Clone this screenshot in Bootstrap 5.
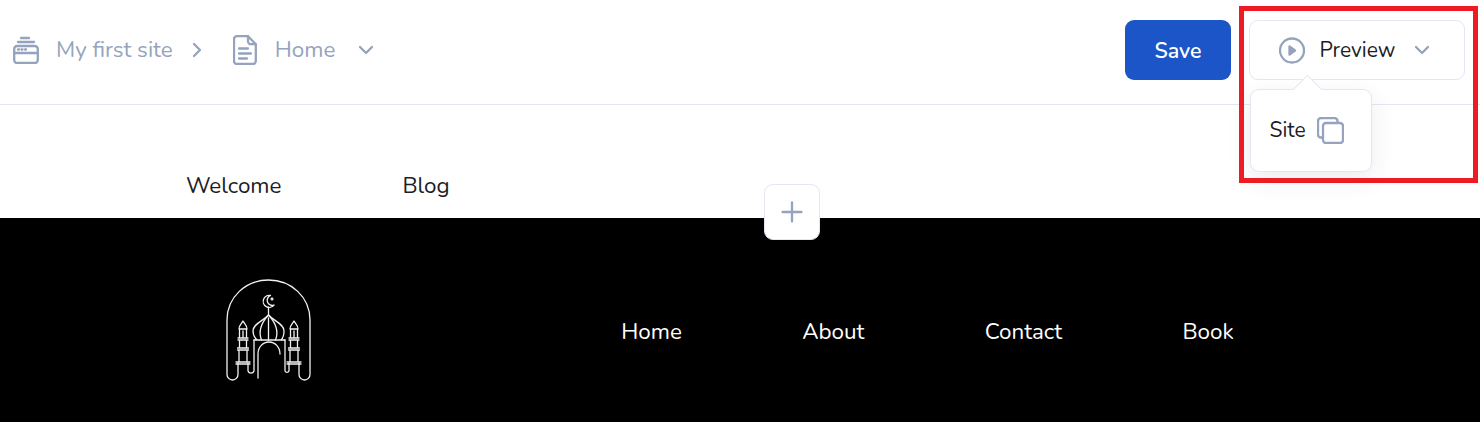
<!DOCTYPE html>
<html lang="en">
<head>
    <meta charset="UTF-8">
    <title>Site editor</title>
    <link href="https://cdn.jsdelivr.net/npm/bootstrap@5.3.0/dist/css/bootstrap.min.css" rel="stylesheet">
    <style>
        body { font-family: "Nunito", "Open Sans", "Liberation Sans", sans-serif; background: #fff; overflow: hidden; }
        .editor-page { height: 422px; }
        .top-bar { height: 105px; border-bottom: 1px solid #e4e6f3; padding: 0 15px 4px 13px; }
        .crumb { font-size: 22.4px; color: #95a3bd; }
        .ico { stroke: #95a3bd; fill: none; stroke-width: 2.3; stroke-linecap: round; stroke-linejoin: round; flex: none; }
        .btn-save { width: 106px; height: 60px; background: #1b55c7; border: 0; border-radius: 9px; color: #fff; font-size: 21.4px; font-weight: 600; padding: 2px 0 0; }
        .btn-save:hover { background: #1b55c7; color: #fff; }
        .btn-preview { width: 216px; height: 60px; margin-left: 18px; background: #fff; border: 1px solid #e4e6f3; border-radius: 9px; color: #1c1c24; font-size: 21px; padding: 0 0 0 29px; }
        .btn-text { padding-top: 2px; margin-left: 13.5px; }
        .preview-menu { position: absolute; left: 1250px; top: 89px; width: 122px; height: 83px; background: #fff; border: 1px solid #e4e6f3; border-radius: 9px; box-shadow: 0 8px 24px rgba(30, 40, 80, .09); font-size: 21px; color: #1c1c24; padding-left: 18.5px; z-index: 3; }
        .preview-menu::before { content: ""; position: absolute; left: 46px; top: -11px; width: 21px; height: 21px; background: #fff; border-left: 1px solid #e4e6f3; border-top: 1px solid #e4e6f3; transform: rotate(45deg); }
        .menu-row { position: relative; height: 81px; }
        .menu-text { padding-top: 1px; }
        .red-mark { position: absolute; left: 1239px; top: 6px; width: 239px; height: 177px; border: 5px solid #ed1c24; z-index: 4; pointer-events: none; }
        .page-nav { height: 113px; padding: 63px 0 0 186px; gap: 121px; font-size: 22.4px; color: #1c1c24; line-height: 36px; }
        .add-btn { position: absolute; left: 764px; top: 184px; width: 56px; height: 56px; background: #fff; border: 1px solid #e4e6f3; border-radius: 9px; z-index: 2; }
        .site-footer { height: 204px; background: #000; color: #fff; font-size: 22.4px; padding: 61px 0 0 226px; }
        .foot-links { gap: 120.3px; margin-left: 310.3px; margin-top: 35px; line-height: 36px; }
        .logo-mark { stroke: #f2f2f2; fill: none; stroke-width: 1.3; stroke-linecap: round; stroke-linejoin: round; flex: none; }
    </style>
</head>
<body>
    <div class="editor-page position-relative">
        <header class="top-bar d-flex align-items-center">
            <svg class="ico" width="26" height="28" viewBox="0 0 26 28">
                <path d="M8 2h8M5 6h16"/>
                <rect x="1.2" y="10" width="23.6" height="17" rx="3"/>
                <path d="M1.2 17h23.6"/>
                <path d="M5 13.5h1M8.5 13.5h1M12 13.5h1"/>
            </svg>
            <span class="crumb" style="margin-left:17px">My first site</span>
            <svg class="ico" style="margin-left:18px" width="12" height="16" viewBox="0 0 12 16"><path d="M3 2l6 6-6 6"/></svg>
            <svg class="ico" style="margin-left:30px" width="24" height="30" viewBox="0 0 24 30">
                <path d="M4 1.2h11l7.8 8V26a3 3 0 0 1-3 3H4a3 3 0 0 1-3-3V4.200a3 3 0 0 1 3-3z"/>
                <path d="M15 1.200v5a3 3 0 0 0 3 3h4.800"/>
                <path d="M6 13.500h9M6 18.500h12M6 23.500h8"/>
            </svg>
            <span class="crumb" style="margin-left:18px">Home</span>
            <svg class="ico" style="margin-left:22px" width="18" height="12" viewBox="0 0 18 12"><path d="M3 3l6 6 6-6"/></svg>
            <button class="btn btn-save ms-auto" type="button">Save</button>
            <button class="btn btn-preview d-flex align-items-center" type="button">
                <svg class="ico" width="27" height="27" viewBox="0 0 27 27">
                    <circle cx="13" cy="13.500" r="12"/>
                    <path d="M10.500 9.500l5.500 4-5.500 4z" fill="#95a3bd"/>
                </svg>
                <span class="btn-text">Preview</span>
                <svg class="ico" style="margin-left:17.500px" width="18" height="12" viewBox="0 0 18 12"><path d="M3 3l6 6 6-6"/></svg>
            </button>
        </header>

        <div class="preview-menu">
            <div class="menu-row d-flex align-items-center">
                <span class="menu-text">Site</span>
                <svg class="ico" style="margin-left:11px" width="27" height="27" viewBox="0 0 27 27">
                    <path d="M5 20.500H4a3 3 0 0 1-3-3V4a3 3 0 0 1 3-3h13.500a3 3 0 0 1 3 3v1"/>
                    <rect x="6" y="6" width="20" height="20" rx="3"/>
                </svg>
            </div>
        </div>
        <div class="red-mark"></div>

        <nav class="page-nav d-flex">
            <span>Welcome</span>
            <span>Blog</span>
        </nav>

        <button class="add-btn d-flex align-items-center justify-content-center p-0" type="button">
            <svg class="ico" width="22" height="22" viewBox="0 0 22 22"><path d="M11 1.500v19M1.500 11h19"/></svg>
        </button>

        <footer class="site-footer d-flex align-items-start">
            <svg class="logo-mark" width="85" height="102" viewBox="226 279 85 102">
                <!-- outline, left lobe to right lobe -->
                <path d="M248 363v8a3.200 3.200 0 0 0 6 0V340M238 363v11.500a5.500 5.500 0 0 1-11 0V320C227 297 246 280 268.500 280S310 297 310 320v54.500a5.500 5.500 0 0 1-11 0V363M289 363v8a2.200 2.200 0 0 1-4 0V340"/>
                <!-- door -->
                <path d="M258 378V354c0-7 5-12 11-12s11 5 11 12"/>
                <!-- dome -->
                <path d="M268.500 315C263 321 253 324 253 331c0 4 2 7 4 9h24c2-2 3-5 3-9 0-7-10-10-15.500-16zM254 340h31"/>
                <path d="M268.500 315C262 322 258 331 261.500 340M268.500 315C275 322 279 331 275.500 340M268.500 318v22"/>
                <!-- finial and crescent -->
                <path d="M268.500 315v-8M270.500 295.500a6 6 0 1 0 3.500 9.500 5 5 0 0 1-3.500-9.500z"/>
                <path d="M272 298l1 1-1 1-1-1z"/>
                <!-- towers -->
                <path d="M239 329c0-4 2.500-5 4-8 1.500 3 4 4 4 8zM239.500 329v9M246.500 329v9M243 331v7M238 338h10M238 340h10M239.500 340v8M246.500 340v8M237.500 348h11M237.500 350h11M239 350v12M247 350v12M236 362h14M236 364h14"/>
                <path d="M290 329c0-4 2.500-5 4-8 1.500 3 4 4 4 8zM290.500 329v9M297.500 329v9M294 331v7M289 338h10M289 340h10M290.500 340v8M297.500 340v8M288.500 348h11M288.500 350h11M290 350v12M298 350v12M287 362h14M287 364h14"/>
            </svg>
            <div class="foot-links d-flex">
                <span>Home</span>
                <span>About</span>
                <span>Contact</span>
                <span>Book</span>
            </div>
        </footer>
    </div>
    <script src="https://cdn.jsdelivr.net/npm/bootstrap@5.3.0/dist/js/bootstrap.bundle.min.js"></script>
</body>
</html>
